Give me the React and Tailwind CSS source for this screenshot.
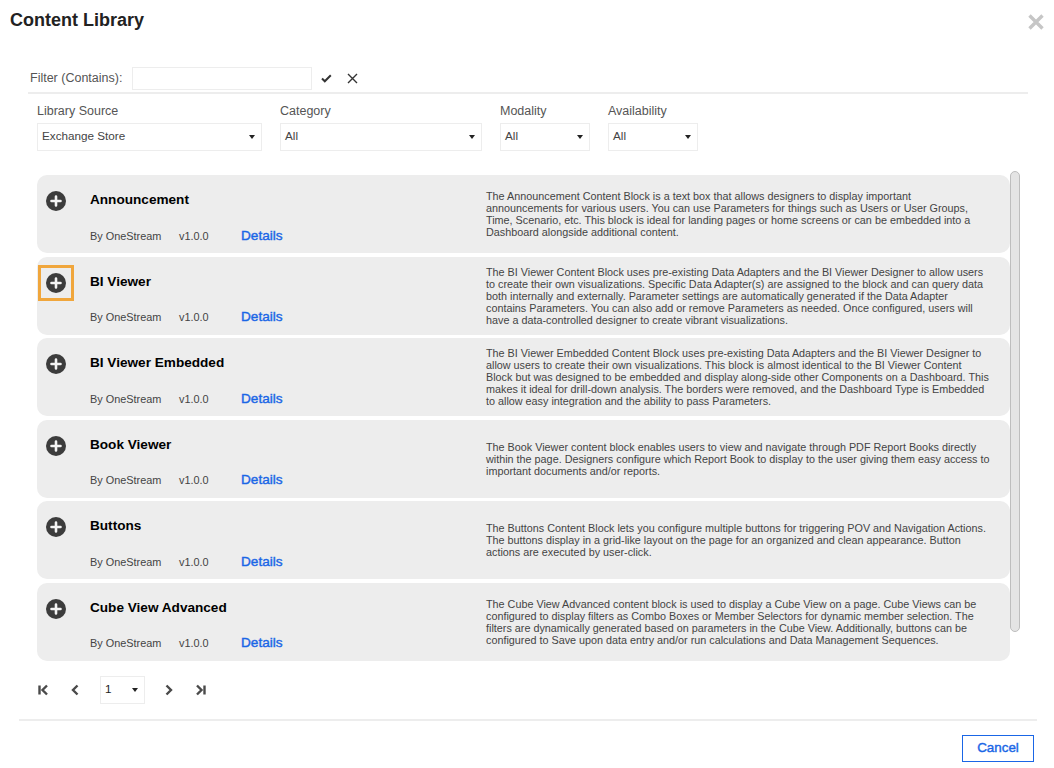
import React from "react";

const items = [
  { t: "Announcement", lines: ["The Announcement Content Block is a text box that allows designers to display important", "announcements for various users. You can use Parameters for things such as Users or User Groups,", "Time, Scenario, etc. This block is ideal for landing pages or home screens or can be embedded into a", "Dashboard alongside additional content."] },
  { t: "BI Viewer", focus: true, lines: ["The BI Viewer Content Block uses pre-existing Data Adapters and the BI Viewer Designer to allow users", "to create their own visualizations. Specific Data Adapter(s) are assigned to the block and can query data", "both internally and externally. Parameter settings are automatically generated if the Data Adapter", "contains Parameters. You can also add or remove Parameters as needed. Once configured, users will", "have a data-controlled designer to create vibrant visualizations."] },
  { t: "BI Viewer Embedded", lines: ["The BI Viewer Embedded Content Block uses pre-existing Data Adapters and the BI Viewer Designer to", "allow users to create their own visualizations. This block is almost identical to the BI Viewer Content", "Block but was designed to be embedded and display along-side other Components on a Dashboard. This", "makes it ideal for drill-down analysis. The borders were removed, and the Dashboard Type is Embedded", "to allow easy integration and the ability to pass Parameters."] },
  { t: "Book Viewer", lines: ["The Book Viewer content block enables users to view and navigate through PDF Report Books directly", "within the page. Designers configure which Report Book to display to the user giving them easy access to", "important documents and/or reports."] },
  { t: "Buttons", lines: ["The Buttons Content Block lets you configure multiple buttons for triggering POV and Navigation Actions.", "The buttons display in a grid-like layout on the page for an organized and clean appearance. Button", "actions are executed by user-click."] },
  { t: "Cube View Advanced", lines: ["The Cube View Advanced content block is used to display a Cube View on a page. Cube Views can be", "configured to display filters as Combo Boxes or Member Selectors for dynamic member selection. The", "filters are dynamically generated based on parameters in the Cube View. Additionally, buttons can be", "configured to Save upon data entry and/or run calculations and Data Management Sequences."] },
];

function Caret() {
  return (
    <svg width="6" height="4" viewBox="0 0 6 4" className="shrink-0">
      <path d="M0 0h6L3 4z" fill="#222" />
    </svg>
  );
}

function Select({ value, className }) {
  return (
    <div className={`flex h-[28px] items-center justify-between border border-[#ededed] bg-white pl-[4px] pr-[6px] text-[11.7px] text-[#444] ${className}`}>
      <span className="-mt-[2px]">{value}</span>
      <Caret />
    </div>
  );
}

function Field({ label, value, className, wrap }) {
  return (
    <div className={`flex flex-col ${wrap}`}>
      <span className="h-[22px] text-[12.5px] leading-[20px] text-[#555]">{label}</span>
      <Select value={value} className={className} />
    </div>
  );
}

function PlusIcon() {
  return (
    <svg width="20" height="20" viewBox="0 0 20 20">
      <circle cx="10" cy="10" r="10" fill="#3c3c3c" />
      <path d="M10 5.5v9M5.5 10h9" stroke="#f4f4f4" strokeWidth="2.6" strokeLinecap="round" />
    </svg>
  );
}

function Card({ item }) {
  return (
    <div className="flex h-[78px] shrink-0 rounded-[10px] bg-[#ededed]">
      <div className="flex w-[449px] shrink-0 flex-col pt-[8px]">
        <div className="flex h-[36px] items-center">
          <div className={`ml-[1px] flex h-[36px] w-[36px] items-center justify-center border-[3px] ${item.focus ? "border-[#f0a63c]" : "border-transparent"}`}>
            <PlusIcon />
          </div>
          <span className="-mt-[1px] ml-[16px] text-[13.6px] font-bold text-black">{item.t}</span>
        </div>
        <div className="mt-[5px] flex h-[24px] items-center pl-[53px] text-[10.9px] text-[#444]">
          <span className="w-[89px]">By OneStream</span>
          <span className="w-[62px]">v1.0.0</span>
          <span className="text-[13.6px] text-[#1a66e6] [-webkit-text-stroke:0.4px_#1a66e6]">Details</span>
        </div>
      </div>
      <div className="flex flex-1 flex-col justify-center whitespace-nowrap text-[10.8px] leading-[12px] text-[#444]">
        {item.lines.map((l) => (
          <div key={l}>{l}</div>
        ))}
      </div>
    </div>
  );
}

function Glyph({ d }) {
  return (
    <svg width="12" height="12" viewBox="0 0 12 12" fill="none" stroke="#4a4a4a" strokeWidth="2.4">
      <path d={d} />
    </svg>
  );
}

export default function App() {
  return (
    <div className="flex h-[768px] w-[1054px] flex-col overflow-hidden bg-white font-['Liberation_Sans',Arial,sans-serif]">
      <div className="flex h-[44px] shrink-0 items-center justify-between pl-[10px] pr-[10px]">
        <h1 className="-mt-[4px] text-[18px] font-bold text-[#222]">Content Library</h1>
        <svg width="16" height="16" viewBox="0 0 16 16" className="-mt-[1px]">
          <path d="M1.5 1.5l13 13M14.5 1.5l-13 13" stroke="#c6c6c6" strokeWidth="3.4" />
        </svg>
      </div>

      <div className="mx-[28px] mt-[23px] flex h-[23px] w-[1000px] shrink-0 items-center pl-[2px]">
        <span className="w-[102px] text-[12.5px] text-[#555]">Filter (Contains):</span>
        <div className="h-[23px] w-[180px] border border-[#ededed]" />
        <svg width="11" height="9" viewBox="0 0 11 9" className="ml-[9px]" fill="none" stroke="#333" strokeWidth="2">
          <path d="M1 4.5l2.8 2.8 6-6" />
        </svg>
        <svg width="11" height="11" viewBox="0 0 11 11" className="ml-[15px]" fill="none" stroke="#333" strokeWidth="1.4">
          <path d="M1 1l9 9M10 1l-9 9" />
        </svg>
      </div>
      <div className="mx-[28px] mt-[2px] h-[2px] w-[1000px] shrink-0 bg-[#ededed]" />

      <div className="mt-[7px] flex shrink-0 pl-[37px]">
        <Field label="Library Source" value="Exchange Store" className="w-[225px]" wrap="mr-[18px]" />
        <Field label="Category" value="All" className="w-[202px]" wrap="mr-[18px]" />
        <Field label="Modality" value="All" className="w-[90px]" wrap="mr-[18px]" />
        <Field label="Availability" value="All" className="w-[90px]" />
      </div>

      <div className="mt-[20px] flex h-[490px] shrink-0 pl-[37px]">
        <div className="mt-[4px] flex w-[973px] flex-col gap-[3.5px]">
          {items.map((it) => (
            <Card key={it.t} item={it} />
          ))}
        </div>
        <div className="h-[461px] w-[10px] rounded-[5px] border border-[#bdbdbd] bg-[#e4e4e4]" />
      </div>

      <div className="mt-[15px] flex h-[27px] shrink-0 items-center pl-[37px]">
        <Glyph d="M2.5 1.5v9M10 1.5L5.5 6l4.5 4.5" />
        <span className="ml-[20px]"><Glyph d="M8.5 1.5L4 6l4.5 4.5" /></span>
        <Select value="1" className="ml-[19px] w-[45px] !text-[#222]" />
        <span className="ml-[18px]"><Glyph d="M3.5 1.5L8 6l-4.5 4.5" /></span>
        <span className="ml-[20px]"><Glyph d="M9.5 1.5v9M2 1.5L6.5 6 2 10.5" /></span>
      </div>

      <div className="mx-[19px] mt-[16px] h-[2px] w-[1018px] shrink-0 bg-[#ededed]" />

      <div className="mt-[14px] flex shrink-0 justify-end pr-[20px]">
        <button className="h-[27px] w-[72px] border-[1.5px] border-[#1a66e6] bg-white text-[13.4px] text-[#1a66e6] [-webkit-text-stroke:0.4px_#1a66e6]">Cancel</button>
      </div>
    </div>
  );
}
